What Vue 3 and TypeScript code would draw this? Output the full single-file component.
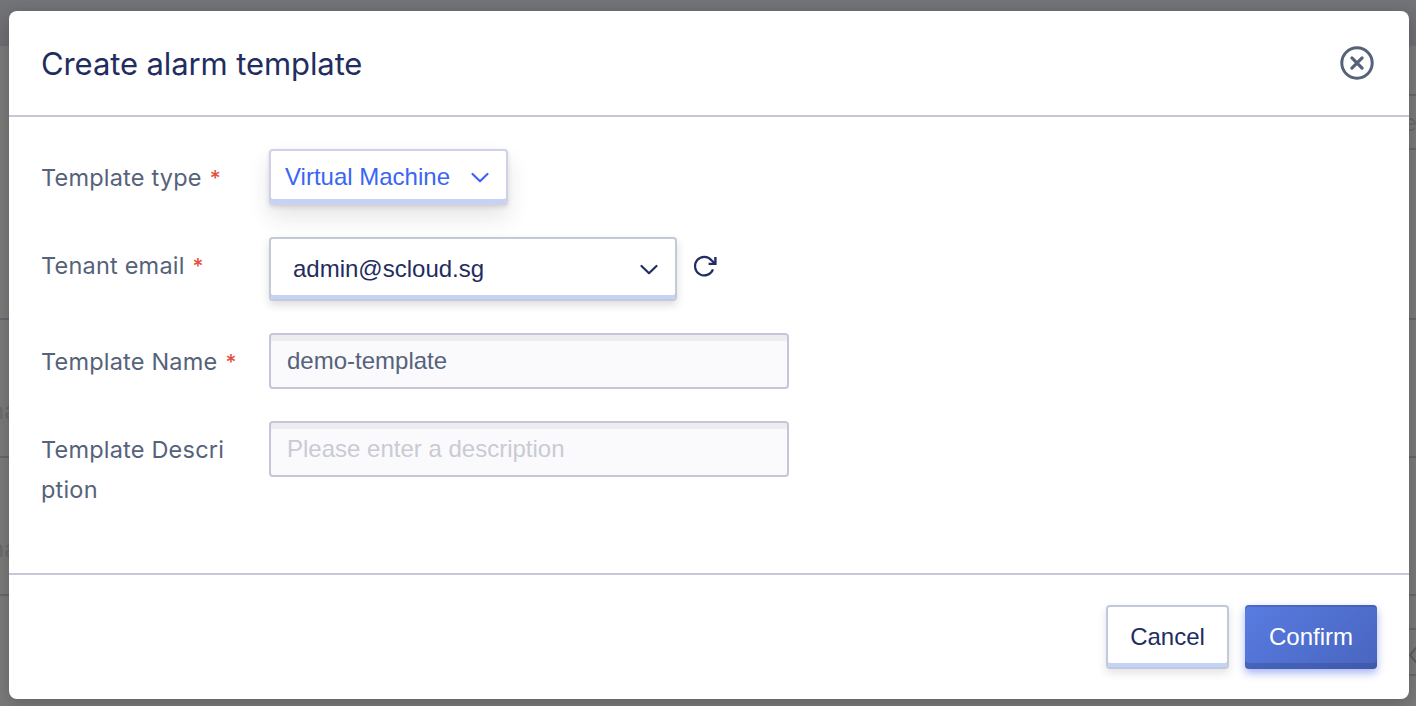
<script setup lang="ts">
import { ref } from 'vue'

interface RowLine { top: number; side: 'left' | 'right' }

const templateType = ref<string>('Virtual Machine')
const email = ref<string>('admin@scloud.sg')
const name = ref<string>('demo-template')
const description = ref<string>('')
const lines: RowLine[] = [
  { top: 318, side: 'left' }, { top: 456, side: 'left' }, { top: 594, side: 'left' },
  { top: 94, side: 'right' }, { top: 148, side: 'right' }, { top: 318, side: 'right' },
  { top: 456, side: 'right' }, { top: 594, side: 'right' }, { top: 628, side: 'right' }, { top: 674, side: 'right' },
]
</script>

<template>
  <div class="screen">
    <div class="backdrop">
      <div class="topbar"></div>
      <i v-for="l in lines" :key="l.side + l.top" :class="['rule', l.side]" :style="{ top: l.top + 'px' }"></i>
      <span class="peek peek-a">na</span>
      <span class="peek peek-b">na</span>
      <span class="peek peek-c">e</span>
      <svg class="pager" width="8" height="18" viewBox="0 0 8 18"><path d="M8 2 2 9l6 7" /></svg>
    </div>
    <section class="modal">
      <header class="head">
        <h1>Create alarm template</h1>
        <svg class="close" width="36" height="36" viewBox="0 0 36 36">
          <circle cx="18" cy="18" r="15.2" />
          <path d="m12.9 12.9 10.2 10.2M23.1 12.9 12.9 23.1" />
        </svg>
      </header>
      <main class="body">
        <div class="row">
          <label><span>Template type</span><b>*</b></label>
          <button class="type"><span>{{ templateType }}</span>
            <svg width="20" height="12" viewBox="0 0 20 12"><path d="m2.5 2 7.5 7.2L17.5 2" /></svg>
          </button>
        </div>
        <div class="row">
          <label><span>Tenant email</span><b>*</b></label>
          <div class="select"><span>{{ email }}</span>
            <svg width="20" height="12" viewBox="0 0 20 12"><path d="m2.5 2 7.5 7.2L17.5 2" /></svg>
          </div>
          <svg class="refresh" width="26" height="24" viewBox="0 0 26 24">
            <path d="M20 15.4A9.3 9.3 0 1 1 18.5 6.2L22 9.6" />
            <path class="tip" d="M22.4 3v6.9h-6.8" />
          </svg>
        </div>
        <div class="row">
          <label><span>Template Name</span><b>*</b></label>
          <div class="input"><span>{{ name }}</span></div>
        </div>
        <div class="row">
          <label><span>Template Descri</span><br><span>ption</span></label>
          <div class="input"><span :class="{ placeholder: !description }">{{ description || 'Please enter a description' }}</span></div>
        </div>
      </main>
      <footer class="foot">
        <button class="cancel"><span>Cancel</span></button>
        <button class="confirm"><span>Confirm</span></button>
      </footer>
    </section>
  </div>
</template>

<style>
body { margin: 0; overflow: hidden; }
</style>

<style scoped>
* { box-sizing: border-box; }
.screen { position: relative; width: 1416px; height: 706px; padding: 11px 7px 7px 9px; overflow: hidden; background: #7a7a79; font-family: "Liberation Sans", Arial, sans-serif; font-size: 24px; }
.backdrop { position: absolute; inset: 0; }
.topbar { height: 46px; background: linear-gradient(#737478, #6d6d72); }
.rule { position: absolute; height: 2px; width: 9px; background: #646670; }
.left { left: 0; }
.right { right: 0; }
.peek { position: absolute; font: 24px/30px Inter, sans-serif; color: #69696b; }
.peek-a { left: -10px; top: 396px; }
.peek-b { left: -10px; top: 534px; }
.peek-c { left: 1403px; top: 108px; }
.pager { position: absolute; left: 1408px; top: 646px; fill: none; stroke: #5d5e61; stroke-width: 2; }
.modal { position: relative; display: flex; flex-direction: column; width: 1400px; height: 688px; background: #fff; border-radius: 8px; box-shadow: 0 4px 16px rgba(40, 40, 45, .3); }
.head { display: flex; justify-content: space-between; height: 106px; padding: 0 34px 0 32px; border-bottom: 2px solid #c4c8da; }
h1 { margin: 32px 0 0; font: 400 31px/42px Inter, sans-serif; letter-spacing: -.1px; color: #1f2d60; }
span, h1 { white-space: nowrap; }
.close { margin-top: 34px; fill: none; stroke: #56627a; stroke-width: 3; }
.close path { stroke-width: 3.2; stroke-linecap: round; }
.body { height: 456px; padding: 32px 32px 0; }
.row { display: flex; align-items: flex-start; margin-bottom: 32px; }
label { width: 228px; padding-top: 9px; flex: none; font: 23.5px/40px Inter, sans-serif; color: #56627a; letter-spacing: .2px; }
b { margin-left: 8px; font-weight: 500; font-size: 21px; line-height: 20px; color: #e4503e; }
button { font: inherit; }
svg path { stroke-linecap: round; stroke-linejoin: round; }
.type { display: flex; align-items: center; justify-content: space-between; width: 239px; height: 56px; padding: 0 16px 0 14px; border: 2px solid #cfd2e6; border-radius: 4px; background: #fff; color: #3a66f2; box-shadow: inset 0 -4px #c5d2f8, 0 2px 4px rgba(60, 60, 70, .16), 0 12px 22px rgba(40, 40, 40, .12); }
.type svg, .select svg { fill: none; stroke: currentColor; stroke-width: 2.2; }
.type svg { margin-top: 2px; }
.select { display: flex; align-items: center; justify-content: space-between; width: 408px; height: 64px; padding: 0 16px 0 22px; border: 2px solid #c3c9d9; border-radius: 4px; background: #fff; color: #1f2d60; box-shadow: inset 0 -4px #c5d2f8, 0 4px 8px rgba(50, 50, 60, .17); }
.select svg { margin-top: 2px; }
.refresh { margin: 17px 0 0 16px; fill: none; stroke: #1f2d60; stroke-width: 2.2; }
.refresh path { stroke-linecap: butt; stroke-linejoin: miter; }
.refresh .tip { stroke-width: 2.4; }
.input { width: 520px; height: 56px; padding: 0 16px; border: 2px solid #c3c7d9; border-radius: 4px; background: #fafafd; box-shadow: inset 0 6px #ededef; color: #56627a; line-height: 51px; }
.placeholder { color: #c9cbd3; }
.foot { display: flex; justify-content: flex-end; gap: 16px; height: 126px; padding: 30px 32px; border-top: 2px solid #c4c8da; }
.foot button { height: 64px; padding: 0; border-radius: 4px; }
.cancel { width: 123px; border: 2px solid #c3c9dc; background: #fff; color: #1f2d60; box-shadow: inset 0 -4px #c5d2f8, 0 4px 8px rgba(50, 50, 60, .14); }
.confirm { width: 132px; border: 0; background: linear-gradient(135deg, #587ce2, #4965be); color: #fff; box-shadow: inset 0 -6px rgba(50, 70, 140, .38), inset 0 2px rgba(50, 70, 140, .32), 0 4px 8px rgba(66, 98, 220, .48); }
</style>
